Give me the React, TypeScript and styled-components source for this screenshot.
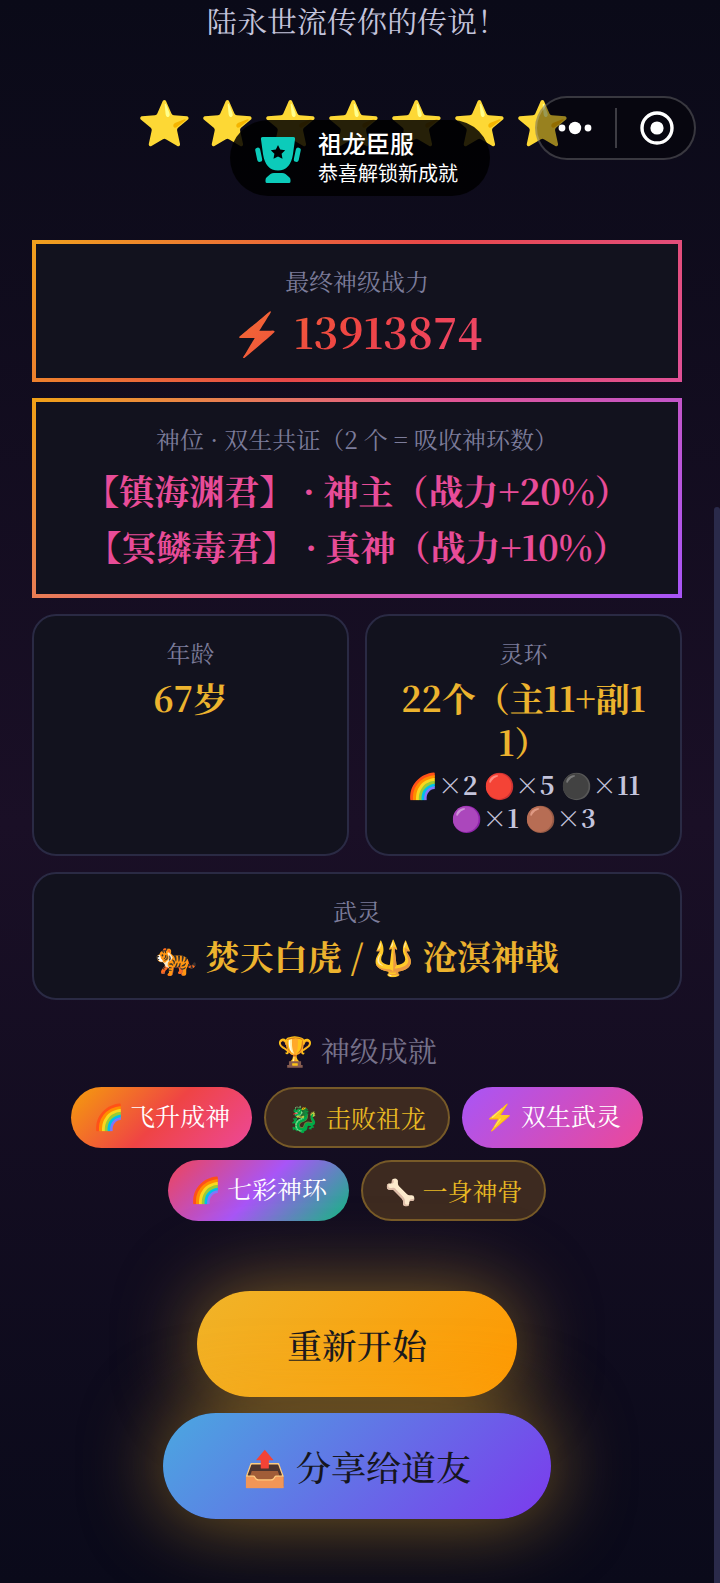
import React from 'react';
import styled, { createGlobalStyle, css } from 'styled-components';

const GlobalStyle = createGlobalStyle`
  *, *::before, *::after { box-sizing: border-box; }
  body {
    margin: 0;
    background: #0a0a18;
    color: #c4c4dc;
    font-family: "Noto Serif SC", "Noto Serif CJK SC", "Source Han Serif SC", serif;
  }
  h2, p { margin: 0; font-weight: 400; }
  button { font-family: inherit; cursor: pointer; }
`;

const Page = styled.div`
  position: relative;
  display: grid;
  grid-template-columns: minmax(0, 1fr) 6px;
  min-height: 100vh;
  background: linear-gradient(180deg, #0a0a18 0%, #1a0f26 52%, #0a0a1a 100%);
`;

const Content = styled.main`
  display: flex;
  flex-direction: column;
  padding: 0 32px 60px;
`;

const ScrollRail = styled.div`
  display: flex;
  flex-direction: column;
  justify-content: flex-end;
`;

const ScrollThumb = styled.div`
  height: 68%;
  border-radius: 3px 3px 0 0;
  background: #2a2a4a;
`;

const Story = styled.p`
  font-size: 30px;
  line-height: 40px;
  text-align: center;
`;

const Stars = styled.div`
  display: flex;
  justify-content: center;
  gap: 8px;
  padding: 46px 8px 86px 0;
  font-size: 44px;
  line-height: 68px;
`;

const CardGrid = styled.section`
  display: grid;
  grid-template-columns: repeat(2, minmax(0, 1fr));
  gap: 16px;
`;

type CardTone = 'plain' | 'power' | 'title';

const cardTones = {
  plain: css`
    border: 2px solid #2a2a44;
    border-radius: 24px;
  `,
  power: css`
    border: 4px solid;
    border-image: linear-gradient(135deg, #f0a01e, #e84848, #e05096) 1;
  `,
  title: css`
    border: 4px solid;
    border-image: linear-gradient(135deg, #f0a018, #e05596, #a855f7) 1;
  `,
};

const Card = styled.article<{ $tone?: CardTone; $wide?: boolean }>`
  grid-column: ${({ $wide }) => ($wide ? '1 / -1' : 'auto')};
  padding: 20px 24px;
  background: #12121e;
  text-align: center;
  ${({ $tone = 'plain' }) => cardTones[$tone]}
`;

const CardLabel = styled.p`
  margin-bottom: 6px;
  color: #7c7c9a;
  font-size: 24px;
  line-height: 34px;
`;

const CardValue = styled.p`
  color: #ecb32e;
  font-size: 34px;
  font-weight: 700;
  line-height: 44px;
  word-break: break-all;
`;

const PowerValue = styled.p`
  background: linear-gradient(135deg, #f59e1b, #ef4444, #ec4899);
  background-clip: text;
  -webkit-text-fill-color: transparent;
  font-size: 42px;
  font-weight: 700;
  line-height: 54px;
`;

const TitleValue = styled.p`
  color: #e84c98;
  font-size: 35px;
  font-weight: 700;
  line-height: 56px;
`;

const RingCounts = styled.p`
  margin-top: 4px;
  font-size: 25px;
  font-weight: 700;
  line-height: 33px;
`;

const SectionTitle = styled.h2`
  padding: 28px 0 16px;
  color: #77728a;
  font-size: 29px;
  line-height: 43px;
  text-align: center;
`;

const Badges = styled.ul`
  display: flex;
  flex-wrap: wrap;
  justify-content: center;
  gap: 12px;
  margin: 0;
  padding: 0 20px;
  list-style: none;
`;

type BadgeTone = 'gold' | 'ascend' | 'twin' | 'rainbow';

const badgeTones = {
  gold: css`
    border: 2px solid #775a28;
    background: #3d2a20;
    color: #e8b923;
  `,
  ascend: css`
    background: linear-gradient(135deg, #f59e0b, #ef4444, #ec4899);
    color: #fff;
  `,
  twin: css`
    background: linear-gradient(135deg, #a855f7, #ec4899);
    color: #fff;
  `,
  rainbow: css`
    background: linear-gradient(135deg, #ef4458, #a855f7, #10b981);
    color: #fff;
  `,
};

const Badge = styled.li<{ $tone: BadgeTone }>`
  padding: 10px 22px;
  border-radius: 31px;
  font-size: 25px;
  line-height: 37px;
  ${({ $tone }) => badgeTones[$tone]}
`;

const Actions = styled.div`
  display: flex;
  flex-direction: column;
  align-items: center;
  gap: 16px;
  padding-top: 70px;
`;

const ActionButton = styled.button<{ $share?: boolean }>`
  min-width: 320px;
  padding: 28px 80px;
  border: 0;
  border-radius: 53px;
  background: ${({ $share }) =>
    $share
      ? 'linear-gradient(135deg, #4aa8e0, #7c3aed)'
      : 'linear-gradient(135deg, #f0b429, #ff9800)'};
  box-shadow: 0 0 80px rgba(240, 180, 41, 0.5);
  color: #16161e;
  font-size: 35px;
  font-weight: 500;
  line-height: 50px;
`;

const Toast = styled.div`
  position: absolute;
  top: 120px;
  left: 50%;
  display: flex;
  align-items: center;
  gap: 16px;
  height: 76px;
  padding: 0 32px 0 24px;
  border-radius: 38px;
  background: rgba(0, 0, 0, 0.85);
  color: #fff;
  font-family: "Noto Sans CJK SC", sans-serif;
  transform: translateX(-50%);
  white-space: nowrap;
`;

const ToastTitle = styled.p`
  font-size: 24px;
  font-weight: 500;
  line-height: 30px;
`;

const ToastText = styled.p`
  font-size: 20px;
  line-height: 30px;
`;

const Capsule = styled.div`
  position: absolute;
  top: 96px;
  right: 24px;
  display: grid;
  grid-template-columns: 78px 2px 1fr;
  align-items: center;
  width: 161px;
  height: 64px;
  border: 2px solid rgba(255, 255, 255, 0.2);
  border-radius: 32px;
  background: rgba(0, 0, 0, 0.4);
`;

const CapsuleButton = styled.button`
  display: flex;
  align-items: center;
  justify-content: center;
  height: 60px;
  padding: 0;
  border: 0;
  background: none;
  color: #fff;
`;

const CapsuleDivider = styled.span`
  height: 40px;
  background: rgba(255, 255, 255, 0.22);
`;

const TrophyIcon = () => (
  <svg width="48" height="50" viewBox="0 0 48 50" fill="#0ccbba" aria-hidden="true">
    <path
      fillRule="evenodd"
      d="M8.500 4h31q1.800 0 1.600 1.800L39 21Q36.500 37.500 24 37.500T9 21L6.900 5.800Q6.700 4 8.500 4ZM24 12l-2.200 4.600-5 .7 3.600 3.500-.9 5 4.500-2.400 4.500 2.400-.9-5 3.600-3.500-5-.7Z"
    />
    <path d="M20 40h8q2 0 3.500 1l3.500 3q1.500 1.200 1.500 3v1.500q0 1.500-1.500 1.500h-22q-1.500 0-1.500-1.500V47q0-1.800 1.500-3l3.500-3q1.500-1 3.500-1Z" />
    <rect x="2.200" y="14.500" width="5" height="14.500" rx="2.500" transform="rotate(-12 4.700 21.700)" />
    <rect x="40.800" y="14.500" width="5" height="14.500" rx="2.500" transform="rotate(12 43.300 21.700)" />
  </svg>
);

const MoreIcon = () => (
  <svg width="36" height="14" viewBox="0 0 36 14" fill="currentColor" aria-hidden="true">
    <circle cx="4" cy="7" r="3.400" />
    <circle cx="17" cy="7" r="6.200" />
    <circle cx="30" cy="7" r="3.400" />
  </svg>
);

const TargetIcon = () => (
  <svg width="36" height="36" viewBox="0 0 36 36" aria-hidden="true">
    <circle cx="19" cy="18" r="15" fill="none" stroke="currentColor" strokeWidth="3.400" />
    <circle cx="19" cy="18" r="6.600" fill="currentColor" />
  </svg>
);

const badges: { text: string; tone: BadgeTone }[] = [
  { text: '🌈 飞升成神', tone: 'ascend' },
  { text: '🐉 击败祖龙', tone: 'gold' },
  { text: '⚡ 双生武灵', tone: 'twin' },
  { text: '🌈 七彩神环', tone: 'rainbow' },
  { text: '🦴 一身神骨', tone: 'gold' },
];

export default function App() {
  return (
    <Page>
      <GlobalStyle />
      <Content>
        <Story>陆永世流传你的传说！</Story>
        <Stars>
          {Array.from({ length: 7 }, (_, i) => (
            <span key={i}>⭐</span>
          ))}
        </Stars>
        <CardGrid>
          <Card $tone="power" $wide>
            <CardLabel>最终神级战力</CardLabel>
            <PowerValue>⚡ 13913874</PowerValue>
          </Card>
          <Card $tone="title" $wide>
            <CardLabel>神位 · 双生共证（2 个 = 吸收神环数）</CardLabel>
            <TitleValue>【镇海渊君】 · 神主（战力+20%）</TitleValue>
            <TitleValue>【冥鳞毒君】 · 真神（战力+10%）</TitleValue>
          </Card>
          <Card>
            <CardLabel>年龄</CardLabel>
            <CardValue>67岁</CardValue>
          </Card>
          <Card>
            <CardLabel>灵环</CardLabel>
            <CardValue>22个（主11+副11）</CardValue>
            <RingCounts>🌈×2 🔴×5 ⚫×11 🟣×1 🟤×3</RingCounts>
          </Card>
          <Card $wide>
            <CardLabel>武灵</CardLabel>
            <CardValue>🐅 焚天白虎 / 🔱 沧溟神戟</CardValue>
          </Card>
        </CardGrid>
        <SectionTitle>🏆 神级成就</SectionTitle>
        <Badges>
          {badges.map(({ text, tone }) => (
            <Badge key={text} $tone={tone}>
              {text}
            </Badge>
          ))}
        </Badges>
        <Actions>
          <ActionButton type="button">重新开始</ActionButton>
          <ActionButton type="button" $share>
            📤 分享给道友
          </ActionButton>
        </Actions>
      </Content>
      <ScrollRail>
        <ScrollThumb />
      </ScrollRail>
      <Toast role="status">
        <TrophyIcon />
        <div>
          <ToastTitle>祖龙臣服</ToastTitle>
          <ToastText>恭喜解锁新成就</ToastText>
        </div>
      </Toast>
      <Capsule>
        <CapsuleButton type="button" aria-label="更多">
          <MoreIcon />
        </CapsuleButton>
        <CapsuleDivider />
        <CapsuleButton type="button" aria-label="关闭">
          <TargetIcon />
        </CapsuleButton>
      </Capsule>
    </Page>
  );
}
